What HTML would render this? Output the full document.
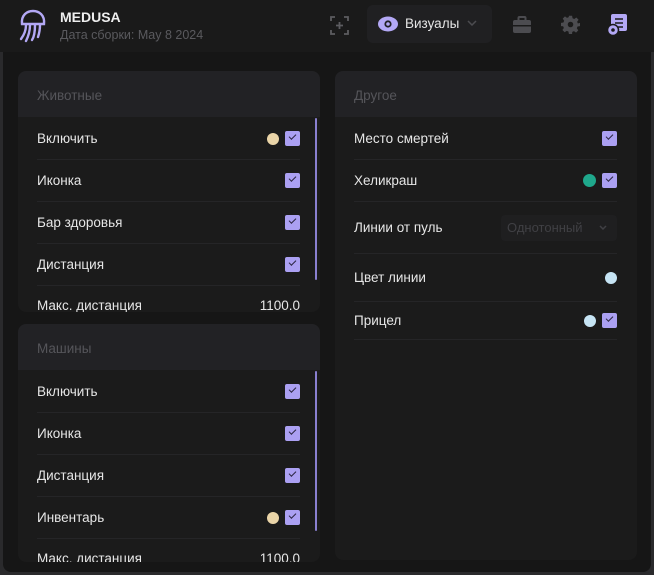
<!DOCTYPE html>
<html><head><meta charset="utf-8"><style>
*{box-sizing:border-box;margin:0;padding:0}
body{width:654px;height:575px;background:#2a2a2c;font-family:"Liberation Sans","DejaVu Sans",sans-serif;overflow:hidden;position:relative}
.win{position:absolute;left:3px;top:0;width:648px;height:572px;background:#161616;border-radius:0 0 8px 8px}
.hdr{position:absolute;left:0;top:0;width:654px;height:52px;background:#1a1a1a}
.abs{position:absolute}
.panel{position:absolute;background:#1b1b1b;border-radius:8px;overflow:hidden}
.ph{height:46px;background:#222225;color:#55555a;font-size:13.5px;padding:17px 0 0 19px}
.row{position:absolute;left:19px;right:20px;height:42px;border-bottom:1px solid #252527;color:#e6e6e6;font-size:13.5px;display:flex;align-items:center}
.row span.l{flex:1}
.cb{width:15px;height:15px;background:#aba0f2;border-radius:2px;position:relative;margin-left:6px}
.cb:after{content:"";position:absolute;left:4px;top:3px;width:6px;height:3px;border-left:1.5px solid #2a2540;border-bottom:1.5px solid #2a2540;transform:rotate(-45deg)}
.dot{width:12px;height:12px;border-radius:50%}
.sb{position:absolute;width:2px;background:#8a80d0;border-radius:1px}
</style></head><body>
<div class="win"></div>
<div class="hdr"></div>
<svg class="abs" style="left:18px;top:9px" width="30" height="34" viewBox="0 0 30 34" fill="none" stroke="#b3a8f5" stroke-width="2.4" stroke-linecap="round">
<path d="M4 15 C3 6 9 2 15 2 C21 2 27 6 26 15 Z"/>
<path d="M8 16 C8 22 6 26 3 30"/><path d="M12 16 C12 23 10 28 8 32"/><path d="M17 16 C17 23 16 28 14 31"/><path d="M22 16 C22 22 21 25 20 28"/>
</svg>
<div class="abs" style="left:60px;top:9px;color:#eee;font-weight:bold;font-size:14px">MEDUSA</div>
<div class="abs" style="left:60px;top:28px;color:#5a5a5e;font-size:12.5px">Дата сборки: May 8 2024</div>
<svg class="abs" style="left:330px;top:16px" width="19" height="19" viewBox="0 0 19 19" fill="none" stroke="#5c5c60" stroke-width="1.8"><path d="M1 5V1H5M14 1H18V5M18 14V18H14M5 18H1V14M9.5 6V13M6 9.5H13"/></svg>
<div class="abs" style="left:367px;top:5px;width:125px;height:38px;background:#202022;border-radius:6px"></div>
<svg class="abs" style="left:378px;top:16px" width="20" height="16" viewBox="0 0 20 16"><ellipse cx="10" cy="8" rx="10" ry="7.5" fill="#b3a8f5"/><circle cx="10" cy="8" r="3.6" fill="#202022"/><circle cx="10" cy="8" r="1.8" fill="#b3a8f5"/></svg>
<div class="abs" style="left:405px;top:16px;color:#e6e6e6;font-size:13.5px">Визуалы</div>
<svg class="abs" style="left:467px;top:20px" width="10" height="6" viewBox="0 0 10 6" fill="none" stroke="#4c4c50" stroke-width="1.5"><path d="M1 1L5 5L9 1"/></svg>
<svg class="abs" style="left:513px;top:16px" width="18" height="17" viewBox="0 0 18 17"><rect x="5.5" y="1" width="7" height="4" rx="1" fill="none" stroke="#4c4c50" stroke-width="2"/><rect x="0" y="4" width="18" height="13" rx="2" fill="#4c4c50"/><rect x="0" y="9" width="18" height="1.5" fill="#1a1a1a"/></svg>
<svg class="abs" style="left:561px;top:15px" width="19" height="19" viewBox="0 0 24 24"><path fill="#4c4c50" d="M10 1h4l.6 3.1 2.2.9 2.6-1.8 2.8 2.8-1.8 2.6.9 2.2L24 10v4l-3.1.6-.9 2.2 1.8 2.6-2.8 2.8-2.6-1.8-2.2.9L14 24h-4l-.6-3.1-2.2-.9-2.6 1.8-2.8-2.8 1.8-2.6-.9-2.2L0 14v-4l3.1-.6.9-2.2-1.8-2.6 2.8-2.8 2.6 1.8 2.2-.9z"/><circle cx="12" cy="12" r="3.5" fill="#1a1a1a"/></svg>
<svg class="abs" style="left:607px;top:14px" width="21" height="22" viewBox="0 0 21 22"><rect x="4" y="0" width="16" height="17" rx="2" fill="#b3a8f5"/><path d="M8 5H16M8 9H16M11 13H16" stroke="#1a1a1a" stroke-width="1.6"/><circle cx="6" cy="16" r="5.5" fill="#b3a8f5" stroke="#1a1a1a" stroke-width="1.5"/><circle cx="6" cy="16" r="1.8" fill="#1a1a1a"/></svg>

<div class="panel" style="left:18px;top:71px;width:302px;height:241px">
<div class="ph">Животные</div>
<div class="row" style="top:47px"><span class="l">Включить</span><div class="dot" style="background:#ead5a8"></div><div class="cb"></div></div>
<div class="row" style="top:89px"><span class="l">Иконка</span><div class="cb"></div></div>
<div class="row" style="top:131px"><span class="l">Бар здоровья</span><div class="cb"></div></div>
<div class="row" style="top:173px"><span class="l">Дистанция</span><div class="cb"></div></div>
<div class="row" style="top:213px;border:none"><span class="l">Макс. дистанция</span><span>1100.0</span></div>
<div class="sb" style="left:297px;top:47px;height:162px"></div>
</div>

<div class="panel" style="left:18px;top:324px;width:302px;height:238px">
<div class="ph">Машины</div>
<div class="row" style="top:47px"><span class="l">Включить</span><div class="cb"></div></div>
<div class="row" style="top:89px"><span class="l">Иконка</span><div class="cb"></div></div>
<div class="row" style="top:131px"><span class="l">Дистанция</span><div class="cb"></div></div>
<div class="row" style="top:173px"><span class="l">Инвентарь</span><div class="dot" style="background:#ead5a8"></div><div class="cb"></div></div>
<div class="row" style="top:213px;border:none"><span class="l">Макс. дистанция</span><span>1100.0</span></div>
<div class="sb" style="left:297px;top:47px;height:160px"></div>
</div>

<div class="panel" style="left:335px;top:71px;width:302px;height:489px">
<div class="ph">Другое</div>
<div class="row" style="top:47px"><span class="l">Место смертей</span><div class="cb"></div></div>
<div class="row" style="top:89px"><span class="l">Хеликраш</span><div class="dot" style="background:#1fa88c;width:13px;height:13px"></div><div class="cb"></div></div>
<div class="row" style="top:131px;height:52px"><span class="l">Линии от пуль</span><div style="width:116px;height:26px;background:#1f1f20;border-radius:4px;color:#404044;font-size:13px;padding:5px 0 0 6px;position:relative">Однотонный<svg style="position:absolute;right:10px;top:10px" width="8" height="5" viewBox="0 0 8 5" fill="none" stroke="#404044" stroke-width="1.5"><path d="M1 1L4 4L7 1"/></svg></div></div>
<div class="row" style="top:183px;height:48px"><span class="l">Цвет линии</span><div class="dot" style="background:#c6e4f4"></div></div>
<div class="row" style="top:231px;height:38px"><span class="l">Прицел</span><div class="dot" style="background:#c6e4f4"></div><div class="cb"></div></div>
</div>
</body></html>
